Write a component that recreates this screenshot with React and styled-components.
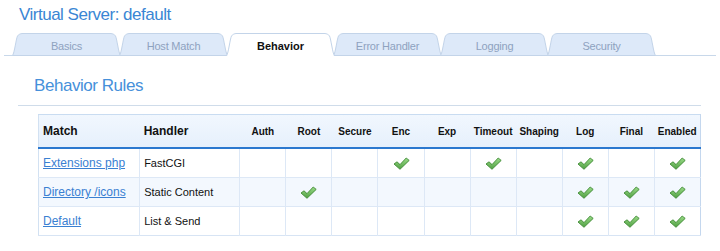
import React from "react";
import styled, { createGlobalStyle } from "styled-components";

const Global = createGlobalStyle`
  html, body { margin: 0; padding: 0; background: #fff; }
  body { font-family: "Liberation Sans", Arial, sans-serif; color: #111; }
`;

const Page = styled.div`
  width: 720px;
  height: 251px;
  overflow: hidden;
  padding-top: 5px;
  box-sizing: border-box;
`;

const Title = styled.h1`
  margin: 0 0 0 19px;
  font-size: 17px;
  line-height: 20px;
  font-weight: normal;
  letter-spacing: -0.5px;
  color: #3a86d4;
`;

const TabBar = styled.div`
  display: flex;
  margin: 8px 4px 0 4px;
  padding-left: 8px;
  height: 22px;
  border-bottom: 1px solid #c8d8ea;
`;

const TabItem = styled.div`
  position: relative;
  width: 109px;
  height: 23px;
  margin-right: -2px;
  flex: none;
  z-index: ${(p) => (p.$active ? 2 : 1)};
  display: flex;
  align-items: center;
  justify-content: center;
  font-size: 11px;
  letter-spacing: ${(p) => (p.$active ? "0" : "-0.2px")};
  font-weight: ${(p) => (p.$active ? "bold" : "normal")};
  color: ${(p) => (p.$active ? "#111" : "#8ea2bf")};
  padding-top: 2px;
  box-sizing: border-box;
`;

const TabShape = styled.svg`
  position: absolute;
  left: 0;
  top: 0;
  width: 109px;
  height: 23px;
`;

const TabLabel = styled.span`
  position: relative;
`;

const Tab = ({ label, active }) => (
  <TabItem $active={active}>
    <TabShape viewBox="0 0 109 23" preserveAspectRatio="none">
      {active ? (
        <path
          d="M0.5,23 C2.5,20 4,6 5.5,3 Q7,0.5 10,0.5 L99,0.5 Q102,0.5 103.5,3 C105,6 106.5,20 108.5,23"
          fill="#ffffff"
          stroke="#c3d4e9"
          strokeWidth="1"
        />
      ) : (
        <path
          d="M0.5,22.5 C2.5,20 4,6 5.5,3 Q7,0.5 10,0.5 L99,0.5 Q102,0.5 103.5,3 C105,6 106.5,20 108.5,22.5 Z"
          fill="#dde9f9"
          stroke="#c3d4e9"
          strokeWidth="1"
        />
      )}
    </TabShape>
    <TabLabel>{label}</TabLabel>
  </TabItem>
);

const Section = styled.div`
  margin: 20px 19px 0 18px;
  padding: 0 0 9px 16px;
  border-bottom: 1px solid #cfdcea;
`;

const SectionTitle = styled.h2`
  margin: 0;
  font-size: 17px;
  line-height: 20px;
  font-weight: normal;
  letter-spacing: -0.45px;
  color: #4690da;
`;

const Table = styled.table`
  margin: 8px 0 0 38px;
  border-collapse: collapse;
  table-layout: fixed;
  width: 663px;
  border-left: 1px solid #d2e1f2;
  border-right: 1px solid #c4d7ee;
  border-top: 1px solid #c9dcf1;
  border-bottom: 1px solid #d7e4f4;
`;

const HeadRow = styled.tr`
  background: linear-gradient(#f1f7fe, #e6f0fc);
  border-bottom: 2px solid #2b78cf;
`;

const Th = styled.th`
  height: 32px;
  padding: 0 0 0 ${(p) => (p.$wide ? "4px" : "0")};
  text-align: ${(p) => (p.$wide ? "left" : "center")};
  font-size: ${(p) => (p.$wide ? "12px" : "10px")};
  font-weight: bold;
  color: #111;
  white-space: nowrap;
  vertical-align: middle;
`;

const Row = styled.tr`
  background: ${(p) => (p.$alt ? "#f3f8fe" : "#ffffff")};
  border-top: 1px solid #dde8f6;
`;

const Td = styled.td`
  height: 28px;
  padding: 0 0 0 ${(p) => (p.$text ? "4px" : "0")};
  border-left: 1px solid #dde8f6;
  text-align: ${(p) => (p.$text ? "left" : "center")};
  vertical-align: middle;
  font-size: 11px;
  color: #111;
  white-space: nowrap;
  &:first-child { border-left: none; }
`;

const MatchLink = styled.a`
  font-size: 12px;
  color: #3a80d2;
  text-decoration: underline;
`;

const CheckSvg = styled.svg`
  display: block;
  margin: 0 auto;
  width: 17px;
  height: 13px;
`;

const Check = () => (
  <CheckSvg viewBox="0 0 17 13">
    <defs>
      <linearGradient id="cg" x1="0" y1="0" x2="0" y2="1">
        <stop offset="0" stopColor="#9bdc88" />
        <stop offset="1" stopColor="#4f9f42" />
      </linearGradient>
    </defs>
    <polygon
      points="1,7 4,4.8 7,7.6 13.2,1 16.2,3.4 7,12.3"
      fill="url(#cg)"
      stroke="#3f8a36"
      strokeWidth="0.9"
      strokeLinejoin="round"
    />
  </CheckSvg>
);

const flags = ["Auth", "Root", "Secure", "Enc", "Exp", "Timeout", "Shaping", "Log", "Final", "Enabled"];

const rules = [
  { match: "Extensions php", handler: "FastCGI", on: ["Enc", "Timeout", "Log", "Enabled"] },
  { match: "Directory /icons", handler: "Static Content", on: ["Root", "Log", "Final", "Enabled"] },
  { match: "Default", handler: "List & Send", on: ["Log", "Final", "Enabled"] },
];

const tabs = ["Basics", "Host Match", "Behavior", "Error Handler", "Logging", "Security"];

export default function App() {
  return (
    <Page>
      <Global />
      <Title>Virtual Server: default</Title>
      <TabBar>
        {tabs.map((t) => (
          <Tab key={t} label={t} active={t === "Behavior"} />
        ))}
      </TabBar>
      <Section>
        <SectionTitle>Behavior Rules</SectionTitle>
      </Section>
      <Table>
        <colgroup>
          <col style={{ width: 101 }} />
          <col style={{ width: 100 }} />
          {flags.map((f) => (
            <col key={f} style={{ width: 46 }} />
          ))}
        </colgroup>
        <thead>
          <HeadRow>
            <Th $wide>Match</Th>
            <Th $wide>Handler</Th>
            {flags.map((f) => (
              <Th key={f}>{f}</Th>
            ))}
          </HeadRow>
        </thead>
        <tbody>
          {rules.map((r, i) => (
            <Row key={r.match} $alt={i === 1}>
              <Td $text>
                <MatchLink href="#">{r.match}</MatchLink>
              </Td>
              <Td $text>{r.handler}</Td>
              {flags.map((f) => (
                <Td key={f}>{r.on.includes(f) ? <Check /> : null}</Td>
              ))}
            </Row>
          ))}
        </tbody>
      </Table>
    </Page>
  );
}
